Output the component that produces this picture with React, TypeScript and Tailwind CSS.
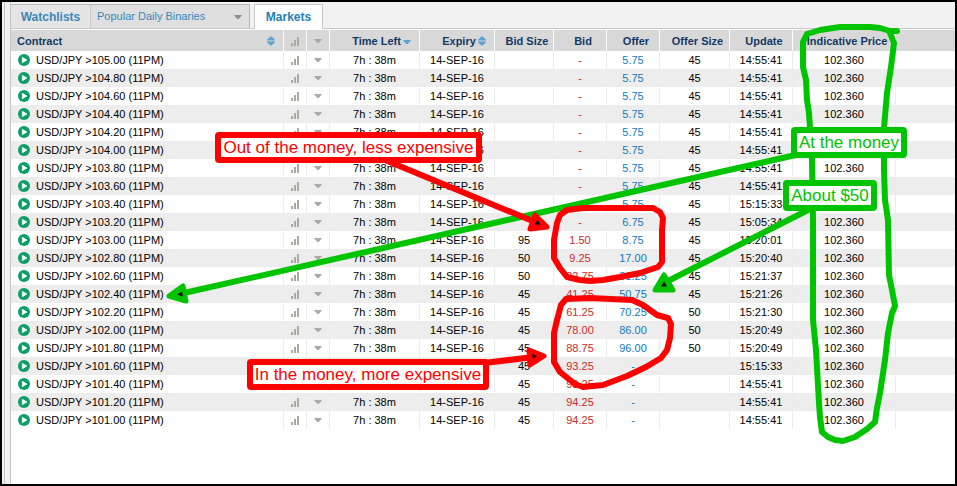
import clsx from 'clsx';

interface Quote {
  strike: string;
  bidSize: string;
  bid: string;
  offer: string;
  offerSize: string;
  update: string;
}

const quotes: Quote[] = [
  { strike: '105.00', bidSize: '', bid: '-', offer: '5.75', offerSize: '45', update: '14:55:41' },
  { strike: '104.80', bidSize: '', bid: '-', offer: '5.75', offerSize: '45', update: '14:55:41' },
  { strike: '104.60', bidSize: '', bid: '-', offer: '5.75', offerSize: '45', update: '14:55:41' },
  { strike: '104.40', bidSize: '', bid: '-', offer: '5.75', offerSize: '45', update: '14:55:41' },
  { strike: '104.20', bidSize: '', bid: '-', offer: '5.75', offerSize: '45', update: '14:55:41' },
  { strike: '104.00', bidSize: '', bid: '-', offer: '5.75', offerSize: '45', update: '14:55:41' },
  { strike: '103.80', bidSize: '', bid: '-', offer: '5.75', offerSize: '45', update: '14:55:41' },
  { strike: '103.60', bidSize: '', bid: '-', offer: '5.75', offerSize: '45', update: '14:55:41' },
  { strike: '103.40', bidSize: '', bid: '-', offer: '5.75', offerSize: '45', update: '15:15:33' },
  { strike: '103.20', bidSize: '', bid: '-', offer: '6.75', offerSize: '45', update: '15:05:34' },
  { strike: '103.00', bidSize: '95', bid: '1.50', offer: '8.75', offerSize: '45', update: '15:20:01' },
  { strike: '102.80', bidSize: '50', bid: '9.25', offer: '17.00', offerSize: '45', update: '15:20:40' },
  { strike: '102.60', bidSize: '50', bid: '22.75', offer: '31.25', offerSize: '45', update: '15:21:37' },
  { strike: '102.40', bidSize: '45', bid: '41.25', offer: '50.75', offerSize: '45', update: '15:21:26' },
  { strike: '102.20', bidSize: '45', bid: '61.25', offer: '70.25', offerSize: '50', update: '15:21:30' },
  { strike: '102.00', bidSize: '45', bid: '78.00', offer: '86.00', offerSize: '50', update: '15:20:49' },
  { strike: '101.80', bidSize: '45', bid: '88.75', offer: '96.00', offerSize: '50', update: '15:20:49' },
  { strike: '101.60', bidSize: '45', bid: '93.25', offer: '-', offerSize: '', update: '15:15:33' },
  { strike: '101.40', bidSize: '45', bid: '93.25', offer: '-', offerSize: '', update: '14:55:41' },
  { strike: '101.20', bidSize: '45', bid: '94.25', offer: '-', offerSize: '', update: '14:55:41' },
  { strike: '101.00', bidSize: '45', bid: '94.25', offer: '-', offerSize: '', update: '14:55:41' }
];

function PlayIcon() {
  return (
    <svg width="12" height="12" viewBox="0 0 12 12" className="shrink-0">
      <circle cx="6" cy="6" r="6" fill="#0b9f68" />
      <path d="M4.3 3.2v5.6L9 6z" fill="#fff" stroke="#fff" strokeWidth="0.6" strokeLinejoin="round" />
    </svg>
  );
}

function BarsIcon() {
  return (
    <svg width="8" height="10" viewBox="0 0 8 10" className="mx-auto" fill="#a9aaa0">
      <rect x="0" y="7" width="2" height="3" />
      <rect x="3" y="4" width="2" height="6" />
      <rect x="6" y="1" width="2" height="9" />
    </svg>
  );
}

function CaretIcon({ className }: { className?: string }) {
  return (
    <svg width="8" height="4" viewBox="0 0 8 4" className={className} fill="currentColor">
      <path d="M0.3 0h7.4v0.8L4.6 4H3.4L0.3 0.8z" />
    </svg>
  );
}

function SortIcon() {
  return (
    <svg width="8" height="10" viewBox="0 0 8 10" className="shrink-0" fill="#5ba3d0">
      <path d="M3.5 0.5h1L8 3.8v0.7H0v-0.7z" />
      <path d="M3.5 9.5h1L8 6.2V5.5H0v0.7z" />
    </svg>
  );
}

const headCell = 'border-r border-white p-0 font-bold';
const bodyCell = 'border-r border-[#ececec] p-0 text-center';

function QuoteTable() {
  return (
    <table className="w-full table-fixed border-separate border-spacing-0 whitespace-nowrap text-[11px] leading-4">
      <colgroup>
        <col className="w-[273px]" />
        <col className="w-[23px]" />
        <col className="w-[23px]" />
        <col className="w-[90px]" />
        <col className="w-[75px]" />
        <col className="w-[59px]" />
        <col className="w-[53px]" />
        <col className="w-[53px]" />
        <col className="w-[70px]" />
        <col className="w-[63px]" />
        <col className="w-[103px]" />
        <col />
      </colgroup>
      <thead>
        <tr className="h-[21px] bg-[#d8d8d8] text-[#123a66]">
          <th className={headCell}>
            <button type="button" className="flex w-full items-center justify-between pl-1.5 pr-2">
              Contract
              <SortIcon />
            </button>
          </th>
          <th className={headCell} aria-label="Chart">
            <BarsIcon />
          </th>
          <th className={headCell} aria-label="Actions">
            <CaretIcon className="mx-auto text-[#a9aaa0]" />
          </th>
          <th className={headCell}>
            <button type="button" className="flex w-full items-center justify-center gap-0.5 pl-3.5">
              Time Left
              <CaretIcon className="mt-0.5 text-[#5ba3d0]" />
            </button>
          </th>
          <th className={headCell}>
            <button type="button" className="flex w-full items-center justify-center gap-0.5 pl-3.5">
              Expiry
              <SortIcon />
            </button>
          </th>
          <th className={clsx(headCell, 'pl-1.5')}>Bid Size</th>
          <th className={clsx(headCell, 'pl-1.5')}>Bid</th>
          <th className={clsx(headCell, 'pl-1.5')}>Offer</th>
          <th className={clsx(headCell, 'pl-1.5')}>Offer Size</th>
          <th className={clsx(headCell, 'pl-1.5')}>Update</th>
          <th className={clsx(headCell, 'pl-1.5')}>Indicative Price</th>
          <th className="p-0" />
        </tr>
      </thead>
      <tbody>
        {quotes.map((quote) => (
          <tr key={quote.strike} className="h-[18px] odd:bg-white even:bg-[#ededed]">
            <td className="border-r border-[#ececec] p-0">
              <div className="flex items-center gap-1.5 pl-[7px]">
                <PlayIcon />
                <span>USD/JPY &gt;{quote.strike} (11PM)</span>
              </div>
            </td>
            <td className={bodyCell}>
              <BarsIcon />
            </td>
            <td className={bodyCell}>
              <CaretIcon className="mx-auto text-[#a9aaa0]" />
            </td>
            <td className={bodyCell}>7h : 38m</td>
            <td className={bodyCell}>14-SEP-16</td>
            <td className={bodyCell}>{quote.bidSize}</td>
            <td className={clsx(bodyCell, 'text-[#cf2a2a]')}>{quote.bid}</td>
            <td className={clsx(bodyCell, 'text-[#1279bf]')}>{quote.offer}</td>
            <td className={bodyCell}>{quote.offerSize}</td>
            <td className={bodyCell}>{quote.update}</td>
            <td className={bodyCell}>102.360</td>
            <td className="p-0" />
          </tr>
        ))}
      </tbody>
    </table>
  );
}

// Freehand loops and arrows drawn over the table
function Markup() {
  return (
    <svg width="957" height="486" viewBox="0 0 957 486" className="absolute left-0 top-0" fill="none">
      <g stroke="#00c400" strokeWidth="6" strokeLinejoin="round" strokeLinecap="round">
        <path d="M897 31L890 31L880 28L870 27L840 27L820 30L807 34L803 42L803 67L806 80L807 100L809 113L810 128L812 160L813 220L813 320L816 350L819 403L820 417L822 432L828 437L835 440L843 441L855 437L867 429L875 422L877 408L880 393L885 360L888 333L892 313L895 306L892 290L889 275L888 220L885 200L884 170L884 128L887 93L891 67L894 43L890 33" />
        <path d="M800 154L184 293" />
        <path d="M812 208L668 281" />
      </g>
      <g fill="#00c400" stroke="#00c400" strokeWidth="5" strokeLinejoin="round">
        <path d="M169 296L183 286L186 301z" />
        <path d="M655 290L664 275L673 290z" />
      </g>
      <g stroke="#f00" strokeWidth="6" strokeLinejoin="round" strokeLinecap="round">
        <path d="M560 215L567 210L583 208L623 208L653 208L660 212L663 218L662 230L662 262L658 267L640 273L620 277L603 280L590 281L580 280L567 277L560 268L554 258L554 240L557 223z" />
        <path d="M566 299L590 298L632 300L643 305L657 315L668 318L671 324L670 338L667 350L661 358L646 367L627 376L603 385L583 387L575 384L560 372L554 362L554 333L557 320L561 305z" />
        <path d="M385 160L535 222" />
        <path d="M484 363L534 357" />
      </g>
      <g fill="#f00" stroke="#f00" strokeWidth="5" strokeLinejoin="round">
        <path d="M547 227L535 215L530 229z" />
        <path d="M544 356L529 350L530 365z" />
      </g>
      <g fill="#111">
        <path d="M177 294.5l5-3 1 5z" />
        <path d="M661 286.5l3-5 3 5z" />
        <path d="M534.500 224.500l3-5 3 5z" />
        <path d="M532 354l5 2-4 3z" />
      </g>
    </svg>
  );
}

const note = 'absolute whitespace-nowrap rounded border-[6px] bg-white text-center text-[17px] leading-[19px]';
const redNote = 'border-[#f00] text-[#f00]';
const greenNote = 'border-[#00c400] text-[#00c400]';

export default function App() {
  return (
    <div className="relative flex min-h-screen border-2 border-black bg-[#f2f2f2] pl-0.5 font-['Liberation_Sans',Arial,sans-serif] text-black">
      <main className="flex min-w-0 flex-1 border-l border-[#c4c4c4] pl-[5px]">
        <div className="flex min-w-0 flex-1 flex-col border-l border-[#c4c4c4]">
          <div className="flex h-[27px] items-end border-b border-[#c8c8c8] pt-0.5 text-xs text-[#3a87b8]">
            <div className="flex h-6 w-[239px] border-r border-t border-[#b8b8b8] bg-[#e5e5e5]">
              <button type="button" className="w-20 border-r border-[#c8c8c8] font-bold">
                Watchlists
              </button>
              <label className="relative flex flex-1 items-center bg-[#dfdfdf]">
                <select aria-label="Watchlist" className="h-full w-full appearance-none pl-1.5 text-[11px] outline-none">
                  <option>Popular Daily Binaries</option>
                </select>
                <CaretIcon className="pointer-events-none absolute right-[7px] text-[#8f8f8f]" />
              </label>
            </div>
            <button
              type="button"
              className="-mb-px ml-1 h-[25px] w-[69px] border border-b-0 border-[#c8c8c8] bg-white font-bold text-[#1f7fb8]"
            >
              Markets
            </button>
          </div>
          <div className="flex-1 bg-white pt-px">
            <QuoteTable />
          </div>
        </div>
      </main>
      <div className="pointer-events-none absolute -left-0.5 -top-0.5">
        <Markup />
        <div className={clsx(note, redNote, 'left-[215px] top-[132px] w-[267px]')}>Out of the money, less expensive</div>
        <div className={clsx(note, redNote, 'left-[247px] top-[359px] w-[242px]')}>In the money, more expensive</div>
        <div className={clsx(note, greenNote, 'left-[791px] top-[127px] w-[116px]')}>At the money</div>
        <div className={clsx(note, greenNote, 'left-[783px] top-[180px] w-[94px]')}>About $50</div>
      </div>
    </div>
  );
}
